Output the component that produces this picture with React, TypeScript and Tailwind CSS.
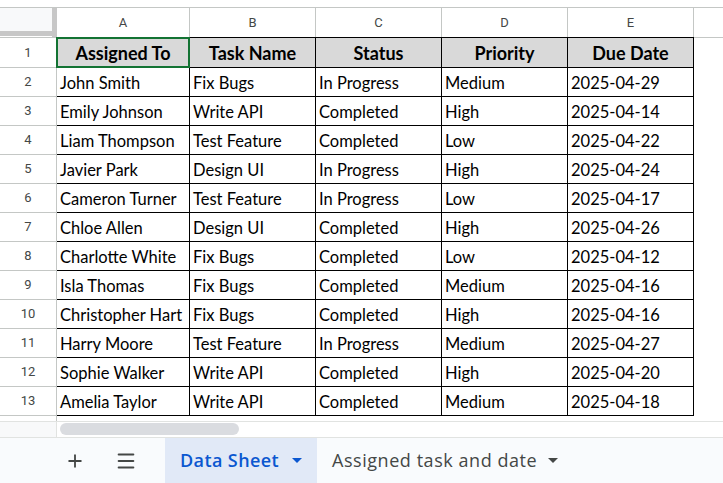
import { Plus, Menu } from "lucide-react";

const rows = [
  ["John Smith", "Fix Bugs", "In Progress", "Medium", "2025-04-29"],
  ["Emily Johnson", "Write API", "Completed", "High", "2025-04-14"],
  ["Liam Thompson", "Test Feature", "Completed", "Low", "2025-04-22"],
  ["Javier Park", "Design UI", "In Progress", "High", "2025-04-24"],
  ["Cameron Turner", "Test Feature", "In Progress", "Low", "2025-04-17"],
  ["Chloe Allen", "Design UI", "Completed", "High", "2025-04-26"],
  ["Charlotte White", "Fix Bugs", "Completed", "Low", "2025-04-12"],
  ["Isla Thomas", "Fix Bugs", "Completed", "Medium", "2025-04-16"],
  ["Christopher Hart", "Fix Bugs", "Completed", "High", "2025-04-16"],
  ["Harry Moore", "Test Feature", "In Progress", "Medium", "2025-04-27"],
  ["Sophie Walker", "Write API", "Completed", "High", "2025-04-20"],
  ["Amelia Taylor", "Write API", "Completed", "Medium", "2025-04-18"],
];

const headers = ["Assigned To", "Task Name", "Status", "Priority", "Due Date"];
const letters = ["A", "B", "C", "D", "E"];
const widths = ["w-[133px]", "w-[126px]", "w-[126px]", "w-[126px]", "w-[126px]"];

const cellFont = { fontFamily: "Lato, 'Liberation Sans', sans-serif" };
const uiFont = { fontFamily: "Roboto, 'Liberation Sans', sans-serif" };
const tabFont = { fontFamily: "'Open Sans', Roboto, sans-serif" };

const Caret = ({ color }: { color: string }) => (
  <svg width="10" height="5" viewBox="0 0 10 5">
    <path d="M0 0 L10 0 L5 5 Z" fill={color} />
  </svg>
);

export default function App() {
  return (
    <div className="w-[723px] h-[483px] bg-white overflow-hidden flex flex-col select-none">
      <div className="h-[7px] shrink-0" />

      {/* column letters */}
      <div className="flex h-[30px] shrink-0 border-t border-[#c4c7c5]" style={uiFont}>
        <div className="w-[57px] shrink-0 flex">
          <div className="w-[52px] h-[23px] bg-[#f8f9fa]" />
          <div className="w-[5px] bg-[#c7c7c7]" />
        </div>
        {letters.map((l, i) => (
          <div
            key={l}
            className={`${widths[i]} shrink-0 border-r border-[#c4c7c5] flex items-center justify-center text-[13px] text-[#444746]`}
          >
            {l}
          </div>
        ))}
        <div className="flex-1" />
      </div>
      <div className="h-0 relative">
        <div className="absolute left-0 top-[-6px] w-[57px] h-[5px] bg-[#c7c7c7]" />
      </div>

      {/* header row 1 */}
      <div className="flex h-[31px] shrink-0" style={cellFont}>
        <div
          className="w-[57px] shrink-0 border-t border-b border-r border-[#c4c7c5] flex items-center justify-center text-[13px] text-[#444746]"
          style={uiFont}
        >
          1
        </div>
        {headers.map((h, i) => (
          <div
            key={h}
            className={`${widths[i]} shrink-0 relative border-t border-b border-r border-black bg-[#d9d9d9] flex items-center justify-center pt-[1px] text-[18px] font-bold text-black`}
          >
            {i === 0 && (
              <div className="absolute -left-px -top-px -right-px -bottom-px border-2 border-[#137333]" />
            )}
            {h}
          </div>
        ))}
        <div className="flex-1 border-t border-[#c4c7c5]" />
      </div>

      {/* data rows */}
      {rows.map((r, ri) => (
        <div key={ri} className="flex h-[29px] shrink-0" style={cellFont}>
          <div
            className="w-[57px] shrink-0 border-b border-r border-[#c4c7c5] flex items-center justify-center text-[13px] text-[#444746]"
            style={uiFont}
          >
            {ri + 2}
          </div>
          {r.map((v, ci) => (
            <div
              key={ci}
              className={`${widths[ci]} shrink-0 border-b border-r border-black flex items-center pl-[3px] pt-[2px] text-[16.5px] text-black whitespace-nowrap overflow-hidden`}
            >
              {v}
            </div>
          ))}
          <div className="flex-1" />
        </div>
      ))}

      <div className="h-[5px] shrink-0 flex">
        <div className="w-[57px] border-r border-[#c4c7c5]" />
      </div>

      {/* horizontal scrollbar */}
      <div className="flex h-[16px] shrink-0 border-t border-[#e1e3e1]">
        <div className="w-[57px] shrink-0 bg-[#f8f9fa] border-r border-[#e1e3e1]" />
        <div className="flex-1 pl-[3px] pt-[1px]">
          <div className="w-[179px] h-[12px] rounded-full bg-[#dadce0]" />
        </div>
      </div>

      {/* sheet tabs */}
      <div className="flex-1 flex items-stretch bg-[#f9fbfd] border-t border-[#e1e3e1]" style={tabFont}>
        <div className="w-[165px] shrink-0 flex items-center text-[#444746]">
          <div className="w-[50px] ml-[65px] flex justify-start">
            <Plus size={20} strokeWidth={2.2} />
          </div>
          <div className="flex">
            <Menu size={22} strokeWidth={2.2} />
          </div>
        </div>
        <div className="w-[152px] shrink-0 bg-[#e1e9f7] flex items-center pl-[15px] gap-[13px]">
          <span className="text-[18px] font-semibold tracking-[0.4px] text-[#0b57d0]">Data Sheet</span>
          <Caret color="#0b57d0" />
        </div>
        <div className="flex items-center pl-[15px] gap-[11px]">
          <span className="text-[18px] tracking-[0.55px] text-[#444746]">Assigned task and date</span>
          <Caret color="#444746" />
        </div>
      </div>
    </div>
  );
}
